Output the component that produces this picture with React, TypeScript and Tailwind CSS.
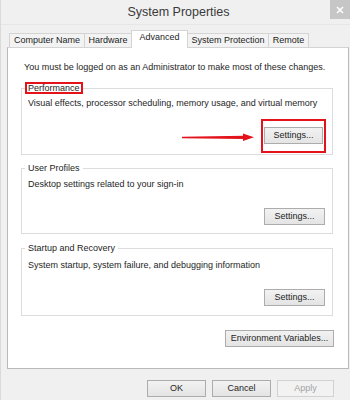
import React from 'react'

const tabs = [
  { label: 'Computer Name', w: 'w-[76px]' },
  { label: 'Hardware', w: 'w-[48px]' },
  { label: 'Advanced', w: 'w-[57px]', active: true },
  { label: 'System Protection', w: 'w-[82px]' },
  { label: 'Remote', w: 'w-[41px]' },
]

const WinButton: React.FC<{ label: string; className?: string; disabled?: boolean }> = ({ label, className = '', disabled }) => (
  <div
    className={`h-[17px] flex items-center justify-center border leading-none ${
      disabled
        ? 'border-[#d2d2d2] bg-[#f2f2f2] text-[#a3a3a3]'
        : 'border-[#acacac] bg-gradient-to-b from-[#f2f2f2] to-[#e4e4e4] text-[#1e1e1e]'
    } ${className}`}
  >
    {label}
  </div>
)

const GroupBox: React.FC<{ title: string; marked?: boolean; className?: string; children: React.ReactNode }> = ({
  title,
  marked,
  className = '',
  children,
}) => (
  <fieldset className={`border border-[#dcdcdc] px-[3px] ${className}`}>
    <legend
      className={`h-[12px] px-px leading-[9px] border-2 ${marked ? 'border-[#e3121b]' : 'border-transparent'}`}
    >
      {title}
    </legend>
    {children}
  </fieldset>
)

export default function App() {
  return (
    <div className="w-[350px] h-[400px] bg-[#f0f0f0] relative overflow-hidden border-l border-[#dadada] font-['Liberation_Sans',Arial,sans-serif] text-[9px] text-[#1e1e1e]">
      {/* title bar */}
      <div className="h-[25px] flex items-center justify-center pl-[6px] text-[12.5px] text-[#3a3a3a] border-b border-[#e6e6e6]">
        System Properties
      </div>
      <div className="absolute right-0 top-0 w-[20px] h-[19px] bg-[#c6c6c6] flex items-center justify-center">
        <svg width="8" height="8" viewBox="0 0 8 8">
          <path d="M1 1L7 7M7 1L1 7" stroke="#fff" strokeWidth="1.6" />
        </svg>
      </div>

      <div className="pl-[6px] pr-[1px]">
        {/* tabs */}
        <div className="mt-[4px] flex items-end pl-[3px] h-[18px]">
          {tabs.map((t) => (
            <div
              key={t.label}
              className={`${t.w} -ml-px flex items-center justify-center border border-b-0 border-[#d4d4d4] ${
                t.active ? 'h-[18px] bg-white relative z-10 -mb-px pb-[3px]' : 'h-[14px] bg-[#f3f3f3]'
              }`}
            >
              {t.label}
            </div>
          ))}
        </div>

        {/* panel */}
        <div className="h-[322px] bg-white border border-[#b9b9b9] border-t-[#d4d4d4] flex flex-col pl-[13px] pr-[15px]">
          <p className="mt-[13px] ml-[3px] leading-[12px]">
            You must be logged on as an Administrator to make most of these changes.
          </p>

          <GroupBox title="Performance" marked className="mt-[9px] pb-px">
            <p className="mt-[3px] ml-[3px] leading-[12px]">
              Visual effects, processor scheduling, memory usage, and virtual memory
            </p>
            <div className="mt-[10px] flex items-center justify-end gap-[7px] mr-[3px]">
              <svg width="72" height="10" viewBox="0 0 72 10" className="mt-[2px]">
                <path d="M0 5.5L62 4.6L62 6.2Z" fill="#e3121b" stroke="#e3121b" strokeWidth="1.6" />
                <path d="M61 1.5L72 5.3L61 9Z" fill="#e3121b" />
              </svg>
              <div className="border-2 border-[#e3121b] px-px pt-[6px] pb-[7px]">
                <WinButton label="Settings..." className="w-[59px] h-[16px]" />
              </div>
            </div>
          </GroupBox>

          <GroupBox title="User Profiles" className="mt-[7px] pb-[8px]">
            <p className="mt-[4px] ml-[3px] leading-[12px]">Desktop settings related to your sign-in</p>
            <div className="mt-[18px] flex justify-end mr-[4px]">
              <WinButton label="Settings..." className="w-[61px]" />
            </div>
          </GroupBox>

          <GroupBox title="Startup and Recovery" className="mt-[8px] pb-[9px]">
            <p className="mt-[5px] ml-[3px] leading-[12px]">System startup, system failure, and debugging information</p>
            <div className="mt-[18px] flex justify-end mr-[4px]">
              <WinButton label="Settings..." className="w-[61px]" />
            </div>
          </GroupBox>

          <div className="mt-[14px] flex justify-end -mr-px">
            <WinButton label="Environment Variables..." className="w-[109px]" />
          </div>
        </div>

        {/* dialog buttons */}
        <div className="mt-[11px] flex justify-end gap-[6px] pr-[15px]">
          <WinButton label="OK" className="w-[59px]" />
          <WinButton label="Cancel" className="w-[59px]" />
          <WinButton label="Apply" className="w-[57px]" disabled />
        </div>
      </div>
    </div>
  )
}
